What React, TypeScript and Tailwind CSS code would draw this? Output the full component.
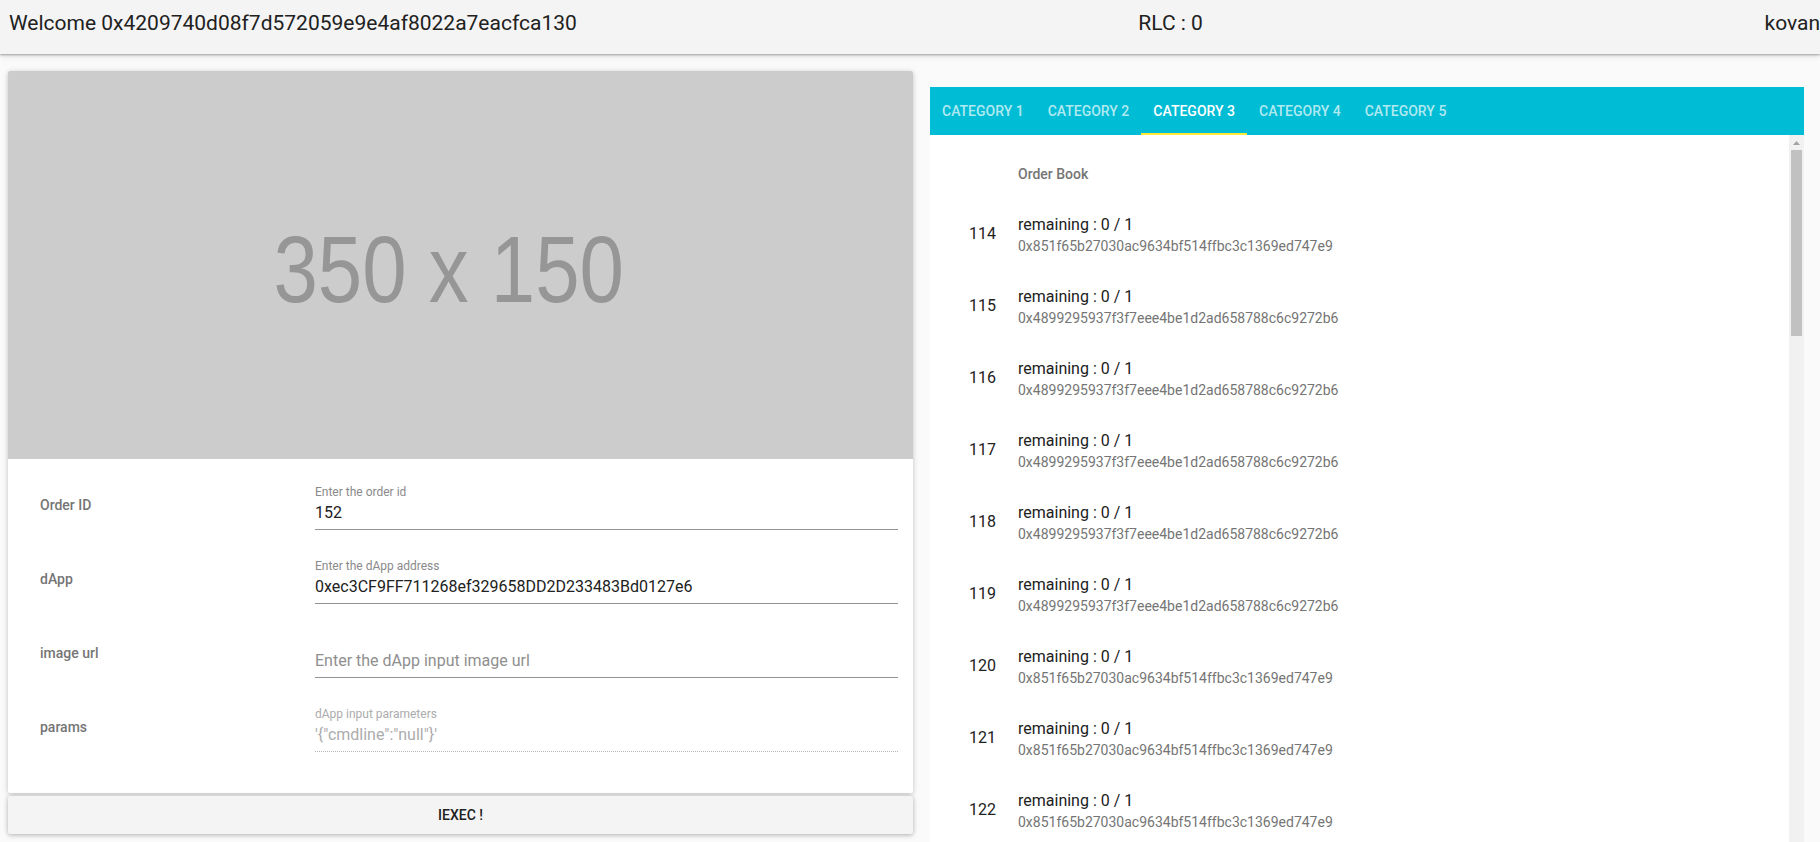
import React from "react";

const orders: { id: number; addr: string }[] = [
  { id: 114, addr: "0x851f65b27030ac9634bf514ffbc3c1369ed747e9" },
  { id: 115, addr: "0x4899295937f3f7eee4be1d2ad658788c6c9272b6" },
  { id: 116, addr: "0x4899295937f3f7eee4be1d2ad658788c6c9272b6" },
  { id: 117, addr: "0x4899295937f3f7eee4be1d2ad658788c6c9272b6" },
  { id: 118, addr: "0x4899295937f3f7eee4be1d2ad658788c6c9272b6" },
  { id: 119, addr: "0x4899295937f3f7eee4be1d2ad658788c6c9272b6" },
  { id: 120, addr: "0x851f65b27030ac9634bf514ffbc3c1369ed747e9" },
  { id: 121, addr: "0x851f65b27030ac9634bf514ffbc3c1369ed747e9" },
  { id: 122, addr: "0x851f65b27030ac9634bf514ffbc3c1369ed747e9" },
];

const tabs = ["CATEGORY 1", "CATEGORY 2", "CATEGORY 3", "CATEGORY 4", "CATEGORY 5"];

function FieldRow({
  label,
  helper,
  value,
  placeholder,
  disabled,
}: {
  label: string;
  helper?: string;
  value?: string;
  placeholder?: string;
  disabled?: boolean;
}) {
  return (
    <div className="flex h-[74px] items-center">
      <div className="w-[307px] pl-[32px] text-[14px] font-medium text-[#757575]">{label}</div>
      <div className="flex h-full flex-1 flex-col pt-[16px]">
        <div
          className={`h-[16px] text-[12px] leading-[16px] ${
            disabled ? "text-[#acacac]" : "text-[#8a8a8a]"
          }`}
        >
          {helper ?? ""}
        </div>
        <div
          className={`h-[25px] pt-[1px] text-[16px] leading-[24px] ${
            disabled ? "text-[#acacac]" : value ? "text-[#212121]" : "text-[#8f8f8f]"
          }`}
        >
          {value ?? placeholder}
        </div>
        <div
          className={`mt-[4px] border-b ${
            disabled ? "border-dotted border-[#b5b5b5]" : "border-solid border-[#939393]"
          }`}
        />
      </div>
    </div>
  );
}

export default function App() {
  return (
    <div className="flex h-[842px] flex-col overflow-hidden bg-[#fafafa] font-[Roboto,sans-serif]">
      {/* Header */}
      <div className="relative z-10 flex h-[54px] shrink-0 items-start justify-between bg-[#f4f4f4] pl-[9px] pt-[11px] text-[21px] leading-[24px] text-[#212121] shadow-[0_1px_2px_rgba(0,0,0,0.3),0_2px_6px_rgba(0,0,0,0.12)]">
        <span>Welcome 0x4209740d08f7d572059e9e4af8022a7eacfca130</span>
        <span>RLC : 0</span>
        <span>kovan</span>
      </div>

      <div className="flex min-h-0 flex-1">
        {/* Left column */}
        <div className="flex w-[913px] shrink-0 flex-col pl-[8px] pt-[17px]">
          <div className="overflow-hidden rounded-[2px] bg-white shadow-[0_1px_6px_rgba(0,0,0,0.12),0_1px_4px_rgba(0,0,0,0.12)]">
            <div className="flex h-[388px] items-center justify-center bg-[#cccccc] pr-[24px] pt-[8px]">
              <span className="scale-x-[0.84] whitespace-pre font-['Liberation_Sans',Arial,sans-serif] text-[95px] leading-none text-[#969696] blur-[0.5px]">
                350 x 150
              </span>
            </div>
            <div className="pb-[29px] pr-[15px] pt-[9px]">
              <FieldRow label="Order ID" helper="Enter the order id" value="152" />
              <FieldRow
                label="dApp"
                helper="Enter the dApp address"
                value="0xec3CF9FF711268ef329658DD2D233483Bd0127e6"
              />
              <FieldRow label="image url" placeholder="Enter the dApp input image url" />
              <FieldRow
                label="params"
                helper="dApp input parameters"
                value={`'{"cmdline":"null"}'`}
                disabled
              />
            </div>
          </div>
          <button className="mt-[3px] h-[38px] w-full rounded-[2px] bg-[#f4f4f4] text-[14px] font-medium text-[#212121] shadow-[0_1px_6px_rgba(0,0,0,0.12),0_1px_4px_rgba(0,0,0,0.2)]">
            IEXEC !
          </button>
        </div>

        {/* Right column */}
        <div className="ml-[17px] flex min-h-0 w-[874px] shrink-0 flex-col pt-[33px]">
          <div className="flex h-[48px] shrink-0 bg-[#00bcd4]">
            {tabs.map((t, i) => (
              <div
                key={t}
                className={`flex flex-col px-[12px] text-[14px] font-medium ${
                  i === 2 ? "text-white" : "text-white/70"
                }`}
              >
                <div className="flex flex-1 items-center pt-[2px]">{t}</div>
                <div className={`-mx-[12px] h-[2px] ${i === 2 ? "bg-[#ffeb3b]" : "bg-transparent"}`} />
              </div>
            ))}
          </div>
          <div className="flex min-h-0 flex-1">
            <div className="flex-1 overflow-hidden bg-white pt-[15px]">
              <div className="h-[48px] pl-[88px] text-[14px] font-medium leading-[48px] text-[#757575]">
                Order Book
              </div>
              {orders.map((o) => (
                <div key={o.id} className="flex h-[72px] shrink-0 items-center">
                  <div className="w-[88px] pl-[39px] text-[16px] text-[#212121]">{o.id}</div>
                  <div className="flex flex-col pt-[2px]">
                    <div className="text-[16px] leading-[20px] text-[#212121]">remaining : 0 / 1</div>
                    <div className="mt-[1px] text-[14px] leading-[20px] text-[#757575]">{o.addr}</div>
                  </div>
                </div>
              ))}
            </div>
            <div className="flex w-[15px] shrink-0 flex-col bg-[#f1f1f1]">
              <div className="flex h-[15px] items-center justify-center">
                <svg width="7" height="4" viewBox="0 0 7 4">
                  <polygon points="3.5,0 7,4 0,4" fill="#a3a3a3" />
                </svg>
              </div>
              <div className="mx-[2px] h-[186px] bg-[#c1c1c1]" />
            </div>
          </div>
        </div>
      </div>
    </div>
  );
}
